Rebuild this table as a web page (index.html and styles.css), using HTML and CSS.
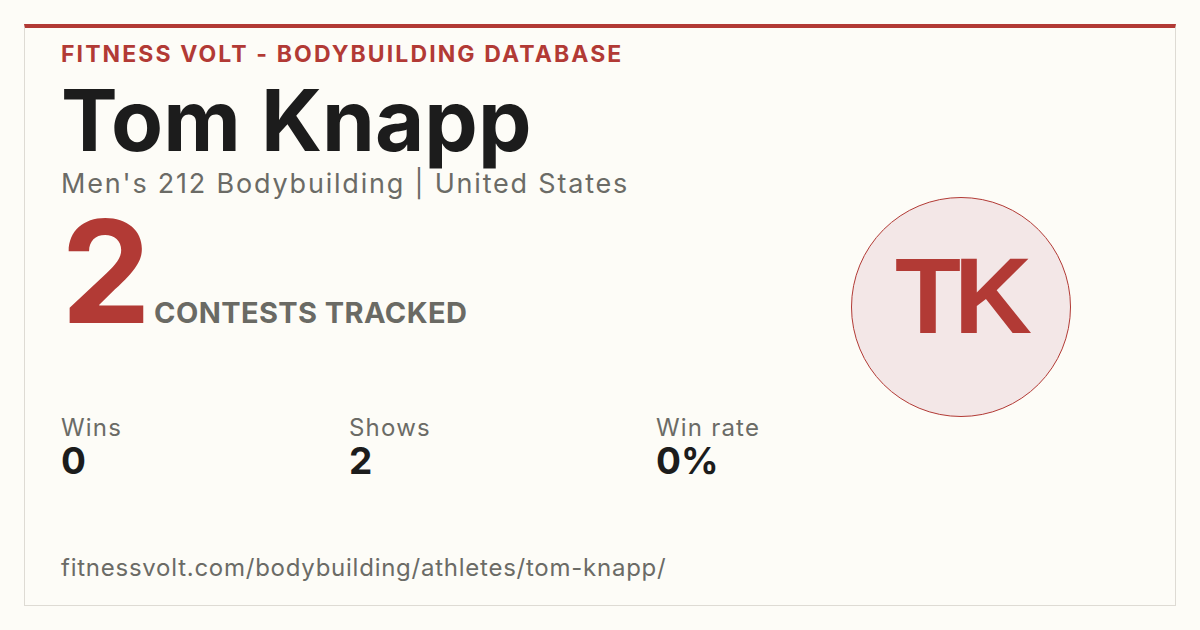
FILE: index.html
```html
<!DOCTYPE html>
<html lang="en">
<head>
<meta charset="utf-8">
<title>Tom Knapp - Fitness Volt</title>
<link rel="stylesheet" href="styles.css">
</head>
<body>
<div class="card">
  <div class="main">
    <div class="brand">FITNESS VOLT - BODYBUILDING DATABASE</div>
    <h1 class="name">Tom Knapp</h1>
    <div class="sub">Men's 212 Bodybuilding | United States</div>
    <div class="contests">
      <span class="big">2</span>
      <span class="ct">CONTESTS TRACKED</span>
    </div>
    <div class="stats">
      <div class="stat"><div class="label">Wins</div><div class="value">0</div></div>
      <div class="stat"><div class="label">Shows</div><div class="value">2</div></div>
      <div class="stat"><div class="label">Win rate</div><div class="value">0%</div></div>
    </div>
    <div class="url">fitnessvolt.com/bodybuilding/athletes/tom-knapp/</div>
  </div>
  <div class="side">
    <div class="avatar"><span>TK</span></div>
  </div>
</div>
</body>
</html>
```
FILE: styles.css
```css
html, body {
  margin: 0;
  padding: 0;
  background: #fdfcf7;
}
body {
  padding: 24px;
  width: 1200px;
  height: 630px;
  box-sizing: border-box;
  font-family: Inter, "Open Sans", sans-serif;
}
.card {
  box-sizing: border-box;
  width: 1152px;
  height: 582px;
  border: 1px solid #dedbd4;
  border-top: 4px solid #b23a35;
  padding: 0 36px;
  display: flex;
}
.main {
  flex: 1;
  display: flex;
  flex-direction: column;
}
.brand {
  margin-top: 12px;
  font-size: 23px;
  line-height: 28px;
  font-weight: 700;
  letter-spacing: 2.1px;
  color: #b23a35;
}
.name {
  margin: 8px 0 0;
  font-size: 85px;
  line-height: 90px;
  font-weight: 700;
  color: #1c1c1c;
  letter-spacing: 0;
}
.sub {
  margin-top: 1px;
  font-size: 27px;
  line-height: 34px;
  letter-spacing: 1.8px;
  color: #6b6b66;
}
.contests {
  display: flex;
  align-items: baseline;
  gap: 7px;
  margin-top: 10px;
}
.big {
  font-size: 143px;
  line-height: 120px;
  font-weight: 700;
  color: #b23a35;
  letter-spacing: -4px;
}
.ct {
  font-size: 29px;
  font-weight: 700;
  color: #6a6a64;
  letter-spacing: 0.4px;
}
.stats {
  display: grid;
  grid-template-columns: 288px 307px auto;
  margin-top: 83px;
}
.label {
  font-size: 24px;
  line-height: 28px;
  letter-spacing: 1.2px;
  color: #6b6b66;
}
.value {
  font-size: 37px;
  line-height: 38px;
  font-weight: 700;
  color: #1c1c1c;
}
.url {
  margin-top: 73px;
  font-size: 24px;
  line-height: 30px;
  letter-spacing: 0.75px;
  color: #6b6b66;
}
.side {
  width: 288px;
  display: flex;
  align-items: flex-start;
}
.avatar {
  margin-top: 169px;
  width: 220px;
  height: 220px;
  box-sizing: border-box;
  border-radius: 50%;
  border: 1.5px solid #b23a35;
  background: #f3e7e7;
  display: flex;
  align-items: center;
  justify-content: center;
}
.avatar span {
  font-family: "Liberation Sans", Arial, sans-serif;
  font-weight: 700;
  font-size: 108px;
  letter-spacing: -7px;
  color: #b23a35;
  margin-top: -24px;
  margin-left: -2px;
}
```
